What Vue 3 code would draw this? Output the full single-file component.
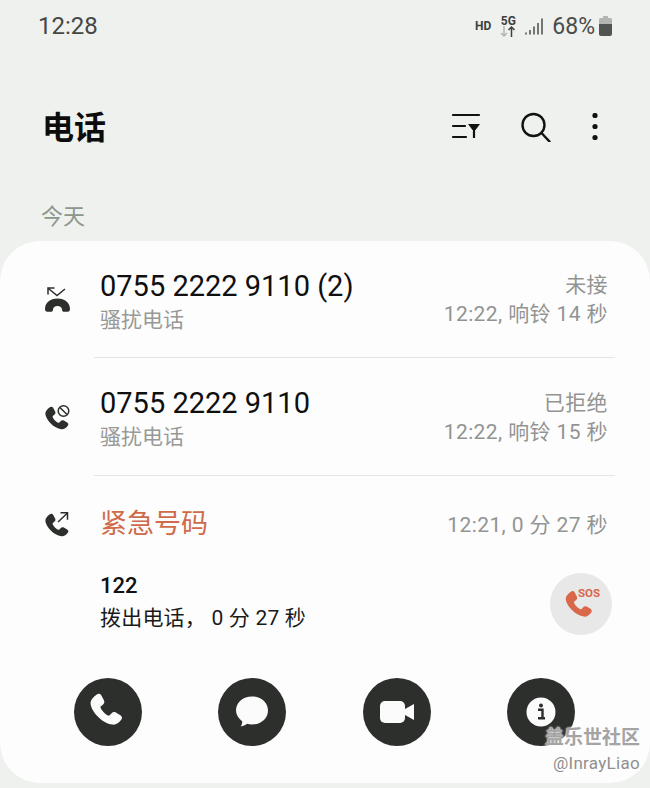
<template>
  <div class="phone">
    <div class="status-bar">
      <span class="clock">12:28</span>
      <div class="status-right">
        <span class="hd">HD</span>
        <div class="net">
          <span class="net-label">5G</span>
          <svg width="16" height="11" viewBox="0 0 16 11" class="net-arrows">
            <path d="M4 0v10M1 7l3 3 3-3" fill="none" stroke="#b4b6b3" stroke-width="1.5" />
            <path d="M11.5 11V1M8.5 4l3-3 3 3" fill="none" stroke="#3e403e" stroke-width="1.5" />
          </svg>
        </div>
        <svg class="signal" width="18" height="17" viewBox="0 0 18 17">
          <path d="M1 14.5v2M5 12v4.5M9 8.5v8M13 5v11.5M17 .5v16" stroke="#4a4c4a" stroke-width="1.5" fill="none" />
        </svg>
        <span class="battery-text">68%</span>
        <svg class="battery" width="13" height="20" viewBox="0 0 13 20">
          <path d="M4 0h5v2h2.5q1.5 0 1.5 1.5V8H0V3.5Q0 2 1.5 2H4z" fill="#b3b5b2" />
          <path d="M0 8h13v10q0 2-2 2H2q-2 0-2-2z" fill="#525452" />
        </svg>
      </div>
    </div>

    <header class="app-bar">
      <h1>电话</h1>
      <div class="app-actions">
        <svg width="30" height="28" viewBox="0 0 30 28" fill="none" stroke="#111" stroke-width="2.2">
          <path d="M2 2h26M2 13h12M2 24h13" stroke-linecap="round" />
          <path d="M17 11h12l-4.5 6h-3z" fill="#111" stroke="none" />
          <path d="M23 15v10" />
        </svg>
        <svg width="30" height="30" viewBox="0 0 30 30" fill="none" stroke="#111" stroke-width="2.4">
          <circle cx="12.5" cy="13" r="11" />
          <path d="M20.5 21l8 8.5" stroke-linecap="round" />
        </svg>
        <svg width="8" height="28" viewBox="0 0 8 28" fill="#111">
          <circle cx="4" cy="2.5" r="2.6" />
          <circle cx="4" cy="13.5" r="2.6" />
          <circle cx="4" cy="24.5" r="2.6" />
        </svg>
      </div>
    </header>

    <div class="section-label">今天</div>

    <main class="card">
      <div class="row">
        <div class="row-icon">
          <svg width="26" height="26" viewBox="0 0 26 26" fill="none">
            <path d="M4 2l8 6.5L20 2M3 7.5V1h6.5" stroke="#2d2f2d" stroke-width="1.5" />
            <path d="M0 22c0-6 5-10.500 12.500-10.500S25 16 25 22c0 1.600-.8 2.800-2.200 2.800h-3.600c-1.300 0-2.200-.8-2.200-2.300 0-2-2-3.500-4.500-3.500s-4.500 1.500-4.500 3.500c0 1.500-.9 2.300-2.200 2.300H2.200C.8 24.800 0 23.600 0 22z" fill="#2d2f2d" />
          </svg>
        </div>
        <div class="row-main">
          <div class="number">0755 2222 9110 (2)</div>
          <div class="sub">骚扰电话</div>
        </div>
        <div class="row-meta">
          <div>未接</div>
          <div>12:22, 响铃 14 秒</div>
        </div>
      </div>
      <div class="divider"></div>

      <div class="row">
        <div class="row-icon">
          <svg width="28" height="28" viewBox="0 0 28 28" fill="none">
            <path :d="handset" transform="translate(-2 0) scale(1.15)" fill="#2d2f2d" />
            <circle cx="19.5" cy="7" r="5.3" stroke="#2d2f2d" stroke-width="1.5" />
            <path d="M16 3.5l7 7" stroke="#2d2f2d" stroke-width="1.5" />
          </svg>
        </div>
        <div class="row-main">
          <div class="number">0755 2222 9110</div>
          <div class="sub">骚扰电话</div>
        </div>
        <div class="row-meta">
          <div>已拒绝</div>
          <div>12:22, 响铃 15 秒</div>
        </div>
      </div>
      <div class="divider"></div>

      <div class="row row-emergency">
        <div class="row-icon">
          <svg width="28" height="28" viewBox="0 0 28 28" fill="none">
            <path :d="handset" transform="translate(-2 0) scale(1.15)" fill="#2d2f2d" />
            <path d="M14 11l9.5-9M16.5 1.8h7v7" stroke="#2d2f2d" stroke-width="1.5" />
          </svg>
        </div>
        <div class="emergency-title">紧急号码</div>
        <div class="row-meta">12:21, 0 分 27 秒</div>
      </div>

      <div class="detail">
        <div class="detail-text">
          <div class="detail-number">122</div>
          <div class="detail-desc">拨出电话， 0 分 27 秒</div>
        </div>
        <div class="sos">
          <svg width="44" height="40" viewBox="0 0 44 40">
            <path :d="handset" transform="translate(3 4) scale(1.3)" fill="#d9674a" />
            <text x="19" y="13" class="sos-label">SOS</text>
          </svg>
        </div>
      </div>

      <div class="actions">
        <button class="action">
          <svg width="44" height="44" viewBox="0 0 28 28">
            <path :d="handset" fill="#fbfbfb" />
          </svg>
        </button>
        <button class="action">
          <svg width="36" height="36" viewBox="0 0 36 36">
            <path d="M18 2.5c9 0 16 5.9 16 14s-7 14-16 14c-1.8 0-3.500-.2-5-.7-1.700 1.500-3.900 2.300-6.200 2.600 1-1.600 1.500-3.300 1.500-5C4.600 24.400 2 20.800 2 16.500c0-8.100 7-14 16-14z" fill="#fbfbfb" />
          </svg>
        </button>
        <button class="action">
          <svg width="34" height="22" viewBox="0 0 34 22">
            <rect x="0" y="0" width="25" height="22" rx="5" fill="#fbfbfb" />
            <path d="M25 8l9-5v16l-9-5z" fill="#fbfbfb" />
          </svg>
        </button>
        <button class="action">
          <svg width="30" height="30" viewBox="0 0 30 30">
            <circle cx="15" cy="15" r="14.5" fill="#fbfbfb" />
            <circle cx="15" cy="8.5" r="2" fill="#2d2f2d" />
            <path d="M12 12.8h4.5v8.500H19M12 21.3h4.500" fill="none" stroke="#2d2f2d" stroke-width="2.4" />
          </svg>
        </button>
      </div>

      <div class="watermark">
        <div class="wm-title">盖乐世社区</div>
        <div class="wm-user">@InrayLiao</div>
      </div>
    </main>
  </div>
</template>

<script setup>
const handset = 'M6.8 2.8c1-.8 2.3-.5 2.9.5l1.7 3.2c.5 1 .3 2-.5 2.7l-1.400 1.200c-.3.3-.4.7-.2 1.100 1 2 2.700 3.800 4.700 4.800.4.2.8.1 1.100-.2l1.200-1.300c.7-.8 1.800-1 2.700-.5l2.900 1.700c1.100.6 1.300 2 .5 3-1.500 1.900-3.300 3.300-5.600 3C10.400 21.200 3.500 14 2.900 8.700c-.2-2.400 2-4.500 3.900-5.900z'
</script>

<style scoped>
.phone {
  width: 650px;
  height: 788px;
  overflow: hidden;
  background: #eef1ed;
  font-family: Roboto, "Noto Sans CJK SC", sans-serif;
  display: flex;
  flex-direction: column;
}

.status-bar {
  height: 52px;
  padding: 0 38px;
  display: flex;
  align-items: center;
  justify-content: space-between;
  box-sizing: border-box;
}

.clock {
  font-size: 24px;
  color: #454745;
}

.status-right {
  display: flex;
  align-items: center;
}

.hd {
  font-size: 12px;
  font-weight: 700;
  color: #3e403e;
  margin-right: 9px;
}

.net {
  width: 16px;
  display: flex;
  flex-direction: column;
  align-items: center;
  margin-right: 9px;
}

.net-label {
  font-size: 12px;
  line-height: 10px;
  font-weight: 700;
  color: #3e403e;
}

.net-arrows {
  display: block;
}

.signal {
  margin-right: 9px;
}

.battery-text {
  font-size: 23px;
  color: #4a4c4a;
  margin-right: 4px;
}

.app-bar {
  height: 150px;
  padding: 0 51px 0 42px;
  display: flex;
  align-items: center;
  justify-content: space-between;
  box-sizing: border-box;
}

.app-bar h1 {
  margin: 0;
  padding-bottom: 4px;
  font-size: 32px;
  font-weight: 700;
  color: #0c0c0c;
}

.app-actions {
  display: flex;
  align-items: center;
  gap: 40px;
}

.section-label {
  height: 30px;
  padding-left: 41px;
  line-height: 30px;
  font-size: 22px;
  color: #8c968e;
  margin-bottom: 9px;
}

.card {
  position: relative;
  height: 542px;
  background: #fdfdfd;
  border-radius: 40px;
}

.row {
  height: 117px;
  margin-right: 35px;
  display: grid;
  grid-template-columns: 100px 1fr auto;
  align-items: center;
}

.row:first-child {
  height: 116px;
}

.divider {
  height: 1px;
  margin: 0 35px 0 94px;
  background: #e4e5e4;
}

.row-icon {
  display: flex;
  justify-content: center;
  padding-left: 16px;
  padding-top: 2px;
}

.row-main {
  padding-top: 7px;
}

.number {
  font-size: 29px;
  line-height: 34px;
  color: #0f0f0f;
}

.sub {
  font-size: 21px;
  line-height: 34px;
  color: #979997;
}

.row-meta {
  font-size: 21px;
  line-height: 29px;
  letter-spacing: 0.4px;
  color: #929492;
  text-align: right;
  padding: 2px 7px 0 0;
}

.row-emergency {
  height: 72px;
  padding-top: 12px;
}

.emergency-title {
  font-size: 27px;
  color: #cf6a4a;
  padding-bottom: 5px;
}

.detail {
  height: 83px;
  padding: 0 38px 0 100px;
  display: flex;
  align-items: center;
  justify-content: space-between;
}

.detail-number {
  font-size: 22px;
  line-height: 32px;
  font-weight: 500;
  color: #111;
}

.detail-desc {
  font-size: 21px;
  line-height: 32px;
  letter-spacing: 0.2px;
  color: #1a1a1a;
}

.sos {
  width: 62px;
  height: 62px;
  margin-top: 5px;
  border-radius: 50%;
  background: #e8e8e8;
  display: flex;
  align-items: center;
  justify-content: center;
}

.sos-label {
  font-size: 11.5px;
  font-weight: 700;
  fill: #d9674a;
}

.actions {
  margin-top: 35px;
  padding: 0 75px 0 74px;
  display: flex;
  justify-content: space-between;
}

.action {
  width: 68px;
  height: 68px;
  padding: 0;
  border: none;
  border-radius: 50%;
  background: #2d2f2d;
  display: flex;
  align-items: center;
  justify-content: center;
}

.watermark {
  position: absolute;
  right: 10px;
  bottom: 8px;
  text-align: right;
}

.wm-title {
  font-size: 19px;
  line-height: 26px;
  color: #a4a4a4;
  font-weight: 700;
  text-shadow: 0 0 2px #fff, 0 0 2px #fff;
}

.wm-user {
  font-size: 17px;
  line-height: 24px;
  letter-spacing: 0.3px;
  color: #8f8f8f;
}
</style>

<style>
body {
  margin: 0;
  background: #eef1ed;
}
</style>
